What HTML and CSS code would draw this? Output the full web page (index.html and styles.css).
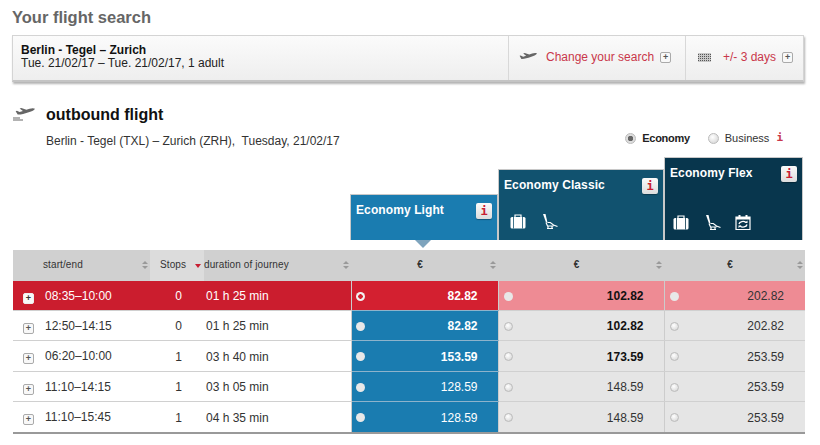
FILE: index.html
```html
<!DOCTYPE html>
<html lang="en">
<head>
  <meta charset="UTF-8" />
  <title>Your flight search</title>
  <link rel="stylesheet" href="styles.css">
</head>
<body>
  <svg class="defs" width="0" height="0">
    <symbol id="plane" viewBox="0 0 24 12">
      <path d="M24 .8c-1.500-1-4.200-.7-6.500 0l-3.800 1.200L7.600 0 5.600.7l3.900 2.900-4 1.300L2.300 3.300.8 3.800l2.400 4.100c3.800.2 8.300-1.200 12.300-2.500 3.800-1.200 7.500-2.600 8.500-4.600z"/>
    </symbol>
    <symbol id="case" viewBox="0 0 16 15">
      <path d="M5 3V1h6v2" fill="none" stroke="#fff" stroke-width="1.200"/>
      <rect x="0.500" y="3" width="15" height="11.500" rx="1.500" fill="#fff"/>
      <path d="M3.500 3v11.500M12.500 3v11.500" stroke="currentColor" stroke-width="0.800"/>
    </symbol>
    <symbol id="seat" viewBox="0 0 15 15">
      <path d="M0 0h2.500l2 8.500H3z" fill="#fff"/>
      <path d="M4.500 8.500h2.800l3.200 2.500 4 1.500M3 8.500l1.500 3.500h6M5 12v3M9 12v3M4 14.500h6" fill="none" stroke="#fff" stroke-width="1.200"/>
    </symbol>
    <symbol id="rebook" viewBox="0 0 16 16">
      <path d="M1 3h14v12.500H1z" fill="none" stroke="#fff" stroke-width="1.200"/>
      <path d="M1 3h14v2.500H1zM3.500 1h2v2h-2zM10.500 1h2v2h-2z" fill="#fff"/>
      <path d="M4 10a4 3 0 0 1 7-1.500M12 10.500a4 3 0 0 1-7 1.500" fill="none" stroke="#fff" stroke-width="1.300"/>
      <path d="M9.500 9h3V6.500zM6.500 11.500h-3V14z" fill="#fff"/>
    </symbol>
  </svg>

  <h1 class="page-title">Your flight search</h1>

  <div class="search-box">
    <div class="search-summary">
      <strong>Berlin - Tegel – Zurich</strong>
      <span>Tue. 21/02/17 – Tue. 21/02/17, 1 adult</span>
    </div>
    <a class="search-action change">
      <svg class="plane-small"><use href="#plane"/></svg>
      <span class="action-label">Change your search</span>
      <span class="plus-box">+</span>
    </a>
    <a class="search-action days">
      <span class="dots"></span>
      <span class="action-label">+/- 3 days</span>
      <span class="plus-box">+</span>
    </a>
  </div>

  <div class="outbound">
    <svg class="plane-big" viewBox="0 0 24 13">
      <use href="#plane" width="24" height="10"/>
      <path d="M0 9.500h7v1H0zM0 11.500h10v1H0z"/>
    </svg>
    <div class="outbound-text">
      <h2>outbound flight</h2>
      <p>Berlin - Tegel (TXL) – Zurich (ZRH),&nbsp; Tuesday, 21/02/17</p>
    </div>
    <div class="cabin">
      <span class="radio cabin-radio checked"></span><b>Economy</b>
      <span class="radio cabin-radio"></span><span>Business</span>
      <span class="cabin-info">i</span>
    </div>
  </div>

  <div class="fares">
    <div class="fare light">
      <div class="fare-top"><span>Economy Light</span><span class="info">i</span></div>
      <span class="fare-arrow"></span>
    </div>
    <div class="fare classic">
      <div class="fare-top"><span>Economy Classic</span><span class="info">i</span></div>
      <div class="fare-icons">
        <svg class="ico-case"><use href="#case"/></svg>
        <svg class="ico-seat"><use href="#seat"/></svg>
      </div>
    </div>
    <div class="fare flex">
      <div class="fare-top"><span>Economy Flex</span><span class="info">i</span></div>
      <div class="fare-icons">
        <svg class="ico-case"><use href="#case"/></svg>
        <svg class="ico-seat"><use href="#seat"/></svg>
        <svg class="ico-rebook"><use href="#rebook"/></svg>
      </div>
    </div>
  </div>

  <table class="flights">
    <colgroup>
      <col class="c-time"><col class="c-stops"><col class="c-dur">
      <col class="c-light"><col class="c-classic"><col class="c-flex">
    </colgroup>
    <thead>
      <tr>
        <th class="th-time">start/end<i class="sort"></i></th>
        <th class="th-stops">Stops<i class="sort-down"></i></th>
        <th class="th-dur">duration of journey<i class="sort"></i></th>
        <th class="th-euro">€<i class="sort"></i></th>
        <th class="th-euro">€<i class="sort"></i></th>
        <th class="th-euro">€<i class="sort"></i></th>
      </tr>
    </thead>
    <tbody>
      <tr class="selected">
        <td class="time"><span class="plus-box">+</span>08:35–10:00</td><td class="stops">0</td><td class="dur">01 h 25 min</td>
        <td class="price p-light"><span class="radio dot-red"></span><b>82.82</b></td>
        <td class="price p-other"><span class="radio"></span><b>102.82</b></td>
        <td class="price p-other"><span class="radio"></span>202.82</td>
      </tr>
      <tr>
        <td class="time"><span class="plus-box">+</span>12:50–14:15</td><td class="stops">0</td><td class="dur">01 h 25 min</td>
        <td class="price p-light"><span class="radio"></span><b>82.82</b></td>
        <td class="price p-other"><span class="radio"></span><b>102.82</b></td>
        <td class="price p-other"><span class="radio"></span>202.82</td>
      </tr>
      <tr class="tall">
        <td class="time"><span class="plus-box">+</span>06:20–10:00</td><td class="stops">1</td><td class="dur">03 h 40 min</td>
        <td class="price p-light"><span class="radio"></span><b>153.59</b></td>
        <td class="price p-other"><span class="radio"></span><b>173.59</b></td>
        <td class="price p-other"><span class="radio"></span>253.59</td>
      </tr>
      <tr>
        <td class="time"><span class="plus-box">+</span>11:10–14:15</td><td class="stops">1</td><td class="dur">03 h 05 min</td>
        <td class="price p-light"><span class="radio"></span>128.59</td>
        <td class="price p-other"><span class="radio"></span>148.59</td>
        <td class="price p-other"><span class="radio"></span>253.59</td>
      </tr>
      <tr class="tall">
        <td class="time"><span class="plus-box">+</span>11:10–15:45</td><td class="stops">1</td><td class="dur">04 h 35 min</td>
        <td class="price p-light"><span class="radio"></span>128.59</td>
        <td class="price p-other"><span class="radio"></span>148.59</td>
        <td class="price p-other"><span class="radio"></span>253.59</td>
      </tr>
    </tbody>
  </table>
</body>
</html>
```

FILE: styles.css
```css
/* Base */
body {
  margin: 0;
  padding: 0 16px 0 12px;
  background: #fff;
  color: #333;
  font-family: "Liberation Sans", Arial, sans-serif;
  font-size: 12px;
  overflow: hidden;
}

.defs {
  position: absolute;
}

.page-title {
  margin: 0;
  padding-top: 8px;
  height: 35px;
  box-sizing: border-box;
  color: #666;
  font-size: 16.500px;
  line-height: 18px;
}

/* Search box */
.search-box {
  display: flex;
  height: 47px;
  box-sizing: border-box;
  border: 1px solid #d4d4d4;
  border-bottom: 2px solid #c4c4c4;
  background: linear-gradient(#fbfbfb, #eee);
  box-shadow: 1px 2px 2px rgba(0, 0, 0, 0.3);
}

.search-summary {
  flex: 1;
  padding: 8px 8px 0;
  color: #222;
  line-height: 13px;
}

.search-summary strong {
  display: block;
  color: #111;
  font-size: 12px;
}

.search-action {
  display: flex;
  align-items: center;
  box-sizing: border-box;
  border-left: 1px solid #d8d8d8;
  color: #c9374a;
  padding-left: 9px;
  padding-bottom: 2px;
}

.change {
  width: 177px;
}

.days {
  width: 118px;
  padding-left: 12px;
}

.plane-small {
  width: 20px;
  height: 9px;
  fill: #666;
  margin-right: 8px;
}

.dots {
  width: 13px;
  height: 9px;
  margin-right: 12px;
  background:
    repeating-linear-gradient(0deg, #c8c8c8 0 1px, transparent 1px 2px),
    repeating-linear-gradient(90deg, #555 0 1px, #c8c8c8 1px 2px);
}

.action-label {
  margin-right: 6px;
}

.plus-box {
  display: inline-block;
  width: 9px;
  height: 9px;
  border: 1px solid #aaa;
  border-radius: 2px;
  background: #f8f8f8;
  color: #555;
  font-size: 9px;
  font-weight: bold;
  line-height: 9px;
  text-align: center;
}

/* Outbound heading */
.outbound {
  display: flex;
  height: 51px;
  margin-top: 24px;
}

.plane-big {
  width: 24px;
  height: 13px;
  margin: 2px 9px 0 1px;
  fill: #666;
}

.outbound-text {
  flex: 1;
}

.outbound-text h2 {
  margin: 0;
  color: #111;
  font-size: 16px;
  line-height: 18px;
}

.outbound-text p {
  margin: 10px 0 0;
  line-height: 14px;
}

.cabin {
  display: flex;
  align-items: center;
  align-self: flex-start;
  margin: 25px 21px 0 0;
  font-size: 11px;
  line-height: 14px;
}

.cabin b {
  margin-right: 18px;
  color: #222;
  letter-spacing: -0.300px;
}

.cabin-radio {
  margin-right: 6px;
}

.cabin-info {
  margin-left: 7px;
  color: #c9374a;
  font-family: "DejaVu Sans Mono", monospace;
  font-weight: bold;
  font-size: 11px;
}

/* Radios */
.radio {
  display: inline-block;
  width: 9px;
  height: 9px;
  border-radius: 50%;
  border: 1px solid #bbb;
  background: radial-gradient(circle at 40% 35%, #fff, #d0d0d0);
}

.radio.checked {
  background: radial-gradient(circle, #666 0 2.500px, #ddd 3px);
}

/* Fare cards */
.fares {
  display: flex;
  align-items: flex-end;
  height: 83px;
  padding-left: 338px;
}

.fare {
  position: relative;
  box-sizing: border-box;
  border: 1px solid #c8c8c8;
  border-bottom: 0;
  color: #fff;
  padding: 8px 5px 0 5px;
  font-weight: bold;
  line-height: 14px;
}

.fare-top {
  display: flex;
  justify-content: space-between;
  align-items: flex-start;
  letter-spacing: 0.100px;
}

.light {
  width: 148px;
  height: 46px;
  background: #1a7cb0;
}

.classic {
  width: 166px;
  height: 71px;
  background: #11526f;
}

.flex {
  width: 139px;
  height: 83px;
  background: #08364d;
}

.info {
  width: 16px;
  height: 16px;
  border-radius: 2px;
  background: linear-gradient(#fafafa, #ddd);
  box-shadow: 0 1px 1px rgba(0, 0, 0, 0.3);
  color: #c81e32;
  font-family: "DejaVu Sans Mono", monospace;
  font-size: 12px;
  line-height: 16px;
  text-align: center;
  letter-spacing: 0;
}

.fare-arrow {
  position: absolute;
  left: 64px;
  top: 100%;
  border: 8px solid transparent;
  border-top-color: #7ea4bd;
  border-bottom: 0;
}

.fare-icons {
  display: flex;
  align-items: center;
  position: absolute;
  left: 11px;
  bottom: 11px;
  color: #11526f;
}

.flex .fare-icons {
  left: 8px;
  bottom: 10px;
  color: #08364d;
}

.ico-case {
  width: 16px;
  height: 15px;
  margin-right: 17px;
}

.ico-seat {
  width: 15px;
  height: 15px;
  margin-right: 14px;
}

.ico-rebook {
  width: 16px;
  height: 16px;
}

/* Flight table */
.flights {
  width: 792px;
  margin-left: 1px;
  margin-top: 10px;
  border-collapse: collapse;
  table-layout: fixed;
  border-bottom: 2px solid #999;
}

.c-time { width: 137px; }
.c-stops { width: 54px; }
.c-dur { width: 147px; }
.c-light { width: 147px; }
.c-classic { width: 166px; }

.flights th {
  position: relative;
  height: 29px;
  padding: 0 0 2px;
  background: #d0d0d0;
  color: #333;
  font-size: 10px;
  font-weight: normal;
  letter-spacing: 0.100px;
  text-align: left;
}

.th-time { padding-left: 30px !important; }
.th-stops { background: #dcdcdc !important; padding-left: 10px !important; }
.th-euro { padding-right: 9px !important; text-align: center !important; font-weight: bold !important; }

.sort {
  position: absolute;
  right: 2px;
  top: 11px;
  width: 6px;
  height: 8px;
}

.sort::before,
.sort::after {
  content: "";
  position: absolute;
  left: 0;
  border: 3px solid transparent;
}

.sort::before {
  top: 0;
  border-top: 0;
  border-bottom-color: #999;
}

.sort::after {
  bottom: 0;
  border-bottom: 0;
  border-top-color: #999;
}

.sort-down {
  position: absolute;
  right: 3px;
  top: 14px;
  border: 3px solid transparent;
  border-top: 4px solid #c81e32;
  border-bottom: 0;
}

.flights td {
  height: 28px;
  padding: 1px 0 0;
  font-size: 12px;
  border-bottom: 1px solid #d0d0d0;
}

.flights .tall td {
  height: 29px;
}

.time .plus-box {
  margin: 0 11px 0 10px;
  vertical-align: -1px;
}

.stops {
  text-align: center;
  padding-left: 3px !important;
}

.dur {
  padding-left: 2px !important;
}

.price {
  position: relative;
  padding-right: 20px !important;
  text-align: right;
  border-left: 1px solid #ccc;
}

.price:last-child {
  padding-right: 21px !important;
}

.price .radio {
  position: absolute;
  left: 4px;
  top: 11px;
  border: 0;
  width: 9px;
  height: 9px;
}

.p-light {
  background: #1a7cb0;
  color: #fff;
}

.flights .p-light {
  border-bottom-color: #8db3cb;
}

.p-light .radio {
  background: #e8e8e8;
}

.p-other {
  background: #e5e5e5;
  color: #333;
}

.p-other b {
  color: #111;
}

.p-other .radio {
  left: 5px;
  border: 1px solid #bbb;
  width: 7px;
  height: 7px;
}

.selected td {
  background: #cb1d2e;
  color: #fff;
}

.selected .plus-box {
  border-color: #eee;
  color: #333;
}

.selected .p-light {
  background: #d32030;
}

.selected .p-other {
  background: #ee8b94;
  color: #333;
}

.selected .p-other .radio {
  border: 0;
  width: 9px;
  height: 9px;
  background: #e8e8e8;
}

.selected .radio.dot-red {
  background: radial-gradient(circle, #d32030 0 2px, #f0f0f0 2.500px);
}
```
